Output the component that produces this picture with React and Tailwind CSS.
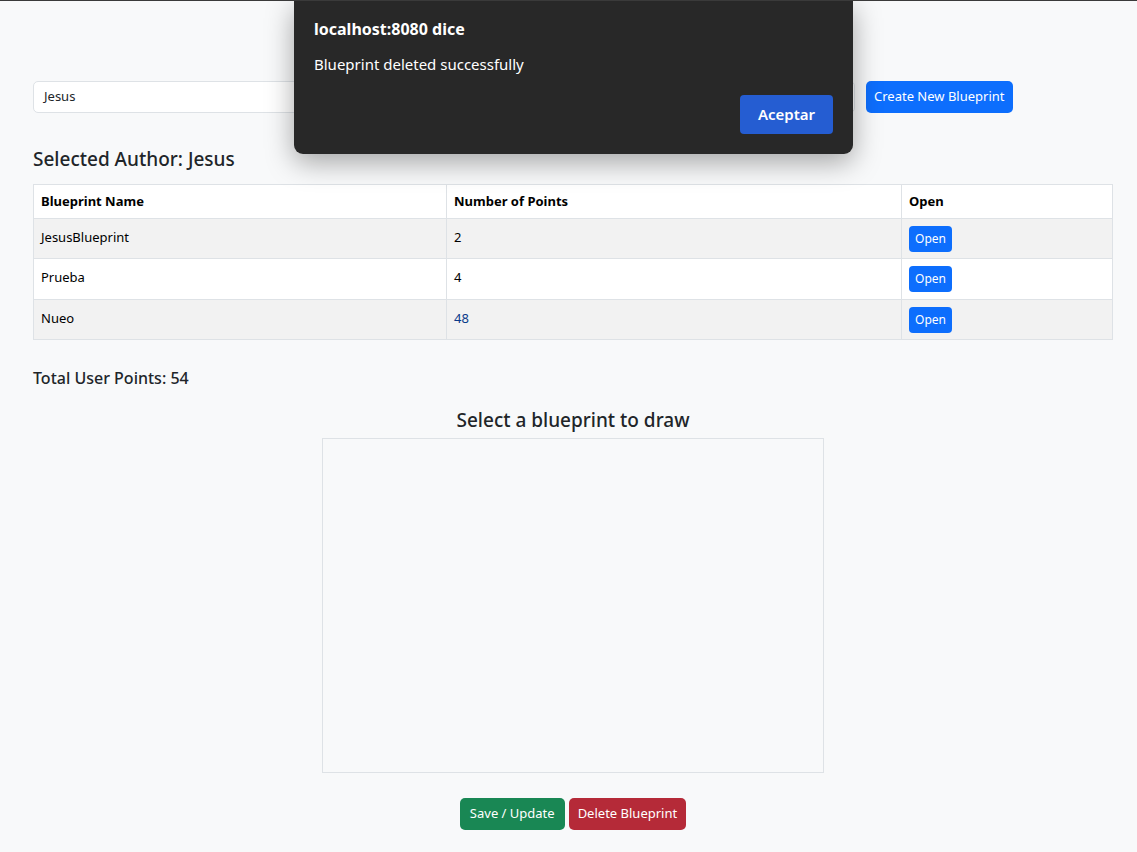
const rows = [
  { name: 'JesusBlueprint', points: 2 },
  { name: 'Prueba', points: 4 },
  { name: 'Nueo', points: 48 },
];

const font = { fontFamily: '"Noto Sans", "Open Sans", sans-serif' };

export default function App() {
  return (
    <div
      className="relative min-h-[852px] bg-[#f8f9fa] text-[#212529] border-t border-[#3a3a3a] overflow-hidden"
      style={font}
    >
      <div className="pl-[33px] pr-[24px] pt-[80px]">
        <div className="flex items-center gap-[11px]">
          <div className="w-[822px] h-[32px] rounded-[5px] border border-[#dee2e6] bg-white flex items-center px-[10px] text-[13px]">
            Jesus
          </div>
          <button
            type="button"
            className="h-[32px] px-[8px] rounded-[5px] bg-[#0d6efd] text-white text-[13px]"
          >
            Create New Blueprint
          </button>
        </div>

        <h2 className="mt-[34px] text-[19px] font-medium leading-[24px]">Selected Author: Jesus</h2>

        <table className="mt-[13px] w-full border-collapse text-[13px] text-black">
          <thead>
            <tr className="bg-white h-[34px]">
              <th className="w-[413px] border border-[#dee2e6] px-[7px] text-left font-bold">Blueprint Name</th>
              <th className="w-[455px] border border-[#dee2e6] px-[7px] text-left font-bold">Number of Points</th>
              <th className="border border-[#dee2e6] px-[7px] text-left font-bold">Open</th>
            </tr>
          </thead>
          <tbody>
            {rows.map((r, i) => (
              <tr key={r.name} className={i % 2 === 0 ? 'bg-[#f2f2f2] h-[40px]' : 'bg-white h-[41px]'}>
                <td className="border border-[#dee2e6] px-[7px] align-top pt-[9px]">{r.name}</td>
                <td className={`border border-[#dee2e6] px-[7px] align-top pt-[9px] ${r.points === 48 ? 'text-[#0a3a8a]' : ''}`}>
                  {r.points}
                </td>
                <td className="border border-[#dee2e6] px-[7px] align-top pt-[7px]">
                  <button
                    type="button"
                    className="h-[26px] w-[43px] rounded-[4px] bg-[#0d6efd] text-white text-[12px]"
                  >
                    Open
                  </button>
                </td>
              </tr>
            ))}
          </tbody>
        </table>

        <h3 className="mt-[26px] text-[16px] font-medium leading-[24px]">Total User Points: 54</h3>

        <div className="flex flex-col items-center mt-[18px]">
          <h3 className="text-[19px] font-medium leading-[24px]">Select a blueprint to draw</h3>
          <div className="mt-[6px] w-[502px] h-[335px] border border-[#dee2e6] bg-[#f8f9fa]" />
          <div className="mt-[25px] flex gap-[4px]">
            <button type="button" className="h-[32px] px-[10px] rounded-[5px] bg-[#198754] text-white text-[13px]">
              Save / Update
            </button>
            <button type="button" className="h-[32px] px-[9px] rounded-[5px] bg-[#b52a38] text-white text-[13px]">
              Delete Blueprint
            </button>
          </div>
        </div>
      </div>

      <div className="absolute left-[294px] top-0 w-[559px] h-[153px] rounded-b-[9px] bg-[#282828] text-white shadow-[0_8px_28px_rgba(0,0,0,0.35)] px-[20px] pt-[16px]">
        <div className="text-[16px] font-bold leading-[24px]">localhost:8080 dice</div>
        <div className="mt-[12px] text-[15px] leading-[22px]">Blueprint deleted successfully</div>
        <div className="mt-[20px] flex justify-end">
          <button
            type="button"
            className="h-[39px] w-[93px] rounded-[4px] bg-[#255dd2] text-white text-[15px] font-semibold"
          >
            Aceptar
          </button>
        </div>
      </div>
    </div>
  );
}
